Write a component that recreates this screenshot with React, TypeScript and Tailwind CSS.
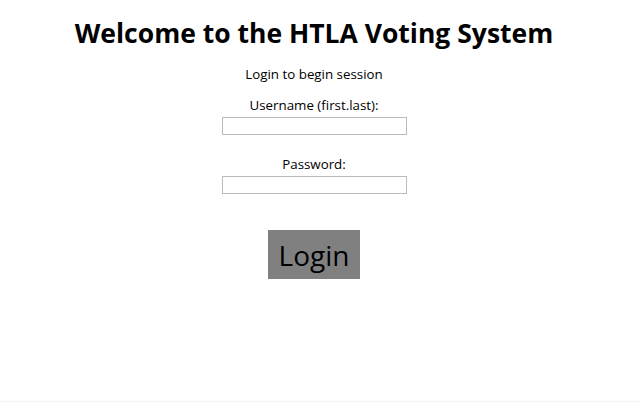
export default function App() {
  return (
    <div className="h-[402px] w-[640px] bg-white text-black font-['Open_Sans',sans-serif] border-b border-[#f3f3f3]">
      <div className="w-[628px] flex flex-col items-center">
        <h1 className="mt-[14px] text-[26.5px] leading-[38px] font-bold">Welcome to the HTLA Voting System</h1>
        <p className="mt-[13px] text-[13.33px] leading-[18px]">Login to begin session</p>
        <label className="mt-[13px] text-[13.33px] leading-[18px]">Username (first.last):</label>
        <input type="text" className="mt-[3px] w-[185px] h-[18px] border border-[#bbb] bg-white" />
        <label className="mt-[20px] text-[13.33px] leading-[18px]">Password:</label>
        <input type="password" className="mt-[3px] w-[185px] h-[18px] border border-[#bbb] bg-white" />
        <button className="mt-[36px] w-[92px] h-[49px] bg-[#808080] text-[28px] leading-[34px]">Login</button>
      </div>
    </div>
  );
}
